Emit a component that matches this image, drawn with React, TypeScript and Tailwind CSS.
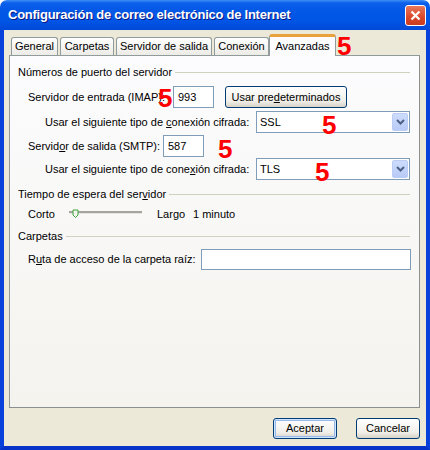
import React from "react";

let Five: React.FC<{ className: string }> = ({ className }) => (
  <span
    className={
      "absolute text-[26px] leading-none font-bold text-[#ff0000] font-['Liberation_Sans',sans-serif] " +
      className
    }
  >
    5
  </span>
);

let Chevron = () => (
  <svg width="9" height="6" viewBox="0 0 9 6">
    <path d="M1 1 L4.5 4.5 L8 1" fill="none" stroke="#4d6185" strokeWidth="2" />
  </svg>
);

let Select: React.FC<{ value: string }> = ({ value }) => (
  <div className="flex items-center w-[154px] h-[22px] bg-white border border-[#7f9db9] pl-[3px] pr-px">
    <span className="flex-1">{value}</span>
    <div className="flex items-center justify-center w-[16px] h-[18px] rounded-[2px] border border-[#b9cdf6] bg-[linear-gradient(to_bottom,#cddcfc,#b7cbf6)]">
      <Chevron />
    </div>
  </div>
);

let Header: React.FC<{ children: React.ReactNode; mt: string }> = ({ children, mt }) => (
  <div className={"flex items-center h-[16px] pl-[8px] pr-[9px] " + mt}>
    <span>{children}</span>
    <div className="flex-1 h-px bg-[#d0d0bf] ml-[3px]" />
  </div>
);

let Tab: React.FC<{ label: string; w: string }> = ({ label, w }) => (
  <div
    className={
      "flex items-center justify-center h-[18px] mr-[2px] rounded-t-[3px] border border-b-0 border-[#919b9c] bg-[linear-gradient(to_bottom,#ffffff,#ecebe6)] " +
      w
    }
  >
    {label}
  </div>
);

let XpButton: React.FC<{ label: React.ReactNode; w: string; isDefault?: boolean }> = ({
  label,
  w,
  isDefault,
}) => (
  <div
    className={
      "flex items-center justify-center h-[21px] rounded-[3px] border border-[#003c74] bg-[linear-gradient(to_bottom,#ffffff,#f0efea_70%,#d8d2c6)] " +
      (isDefault ? "shadow-[inset_0_0_0_1px_#cee7ff,inset_0_0_0_2px_#98b8ea] " : "") +
      w
    }
  >
    {label}
  </div>
);

let App: React.FC = () => {
  return (
    <div className="w-[430px] h-[450px] flex flex-col font-['Liberation_Sans',sans-serif] text-[11px] text-black">
      {/* title bar */}
      <div className="flex items-center h-[30px] rounded-t-[7px] pl-[8px] pr-[4px] bg-[linear-gradient(to_bottom,#3d8ff5_0%,#0c5fea_10%,#0358e6_35%,#0155e5_70%,#0049d8_100%)]">
        <span className="flex-1 text-white text-[13px] font-bold tracking-[-0.25px] [text-shadow:1px_1px_#0a1883]">
          Configuración de correo electrónico de Internet
        </span>
        <div className="flex items-center justify-center w-[21px] h-[21px] rounded-[3px] border border-white bg-[linear-gradient(to_bottom,#e8785a,#d9472a_60%,#c93c1f)]">
          <svg width="11" height="11" viewBox="0 0 11 11">
            <path d="M1.5 1.5 L9.5 9.5 M9.5 1.5 L1.5 9.5" stroke="white" strokeWidth="2.2" />
          </svg>
        </div>
      </div>

      {/* body */}
      <div className="flex-1 flex flex-col bg-[#ece9d8] border-x-4 border-b-4 border-x-[#0842da] border-b-[#0733c8] pl-[5px] pr-[6px]">
        {/* tabs */}
        <div className="flex items-end h-[21px] mt-[4px] pl-[2px]">
          <Tab label="General" w="w-[47px]" />
          <Tab label="Carpetas" w="w-[54px]" />
          <Tab label="Servidor de salida" w="w-[96px]" />
          <div className="flex items-center justify-center w-[55px] h-[18px] rounded-t-[3px] border border-b-0 border-[#919b9c] bg-[linear-gradient(to_bottom,#ffffff,#ecebe6)]">
            Conexión
          </div>
          <div className="relative z-10 flex items-center justify-center w-[67px] h-[22px] -mb-px rounded-t-[3px] border-x border-[#919b9c] border-t-[3px] border-t-[#e9a23b] bg-[#fcfcfe]">
            Avanzadas
          </div>
          <div className="relative w-[16px] h-[21px]">
            <Five className="left-[1px] top-[-1px]" />
          </div>
        </div>

        {/* page */}
        <div className="flex flex-col h-[353px] border border-[#919b9c] border-r-[#8c8f8f] border-b-[#8c8f8f] bg-[linear-gradient(to_bottom,#fcfcfe,#f4f3ee)]">
          <Header mt="mt-[8px]">Números de puerto del servidor</Header>

          <div className="relative flex items-center h-[22px] mt-[6px] pl-[18px]">
            <span className="w-[145px]">Servidor de entrada (IMAP):</span>
            <div className="flex items-center w-[41px] h-[22px] bg-white border border-[#7f9db9] pl-[4px]">993</div>
            <div className="ml-[11px]">
              <XpButton
                w="w-[122px] h-[22px]"
                label={
                  <span>
                    Usar pre<u>d</u>eterminados
                  </span>
                }
              />
            </div>
            <Five className="left-[148px] top-[-1px]" />
          </div>

          <div className="relative flex items-center h-[22px] mt-[3px] pl-[35px]">
            <span className="w-[211px]">
              Usar el siguiente tipo de <u>c</u>onexión cifrada:
            </span>
            <Select value="SSL" />
            <Five className="left-[312px] top-[1px]" />
          </div>

          <div className="relative flex items-center h-[22px] mt-[2px] pl-[18px]">
            <span className="w-[135px]">
              Servid<u>o</u>r de salida (SMTP):
            </span>
            <div className="flex items-center w-[41px] h-[22px] bg-white border border-[#7f9db9] pl-[4px]">587</div>
            <Five className="left-[208px] top-[1px]" />
          </div>

          <div className="relative flex items-center h-[22px] mt-[1px] pl-[35px]">
            <span className="w-[211px]">
              Usar el siguiente tipo de cone<u>x</u>ión cifrada:
            </span>
            <Select value="TLS" />
            <Five className="left-[305px] top-[1px]" />
          </div>

          <Header mt="mt-[6px]">
            <span>
              Tiempo de espera del ser<u>v</u>idor
            </span>
          </Header>

          <div className="flex items-center h-[16px] mt-[4px] pl-[18px]">
            <span className="w-[40px]">Corto</span>
            <svg width="89" height="10" viewBox="0 0 89 10">
              <rect x="1" y="2" width="73" height="2" fill="#a5a5a0" />
              <rect x="1" y="4" width="73" height="1" fill="#e6e5df" />
              <path d="M5 1 H10 V6 L7.5 8.5 L5 6 Z" fill="#f4f4ef" stroke="#3da33d" strokeWidth="1" />
            </svg>
            <span className="w-[36px]">Largo</span>
            <span>1 minuto</span>
          </div>

          <Header mt="mt-[6px]">Carpetas</Header>

          <div className="flex items-center h-[21px] mt-[5px] pl-[18px]">
            <span className="w-[173px]">
              R<u>u</u>ta de acceso de la carpeta raíz:
            </span>
            <div className="w-[210px] h-[21px] bg-white border border-[#7f9db9]" />
          </div>
        </div>

        {/* buttons */}
        <div className="flex justify-end gap-[19px] mt-[10px]">
          <XpButton label="Aceptar" w="w-[64px]" isDefault />
          <XpButton label="Cancelar" w="w-[64px]" />
        </div>
      </div>
    </div>
  );
};

export default App;
